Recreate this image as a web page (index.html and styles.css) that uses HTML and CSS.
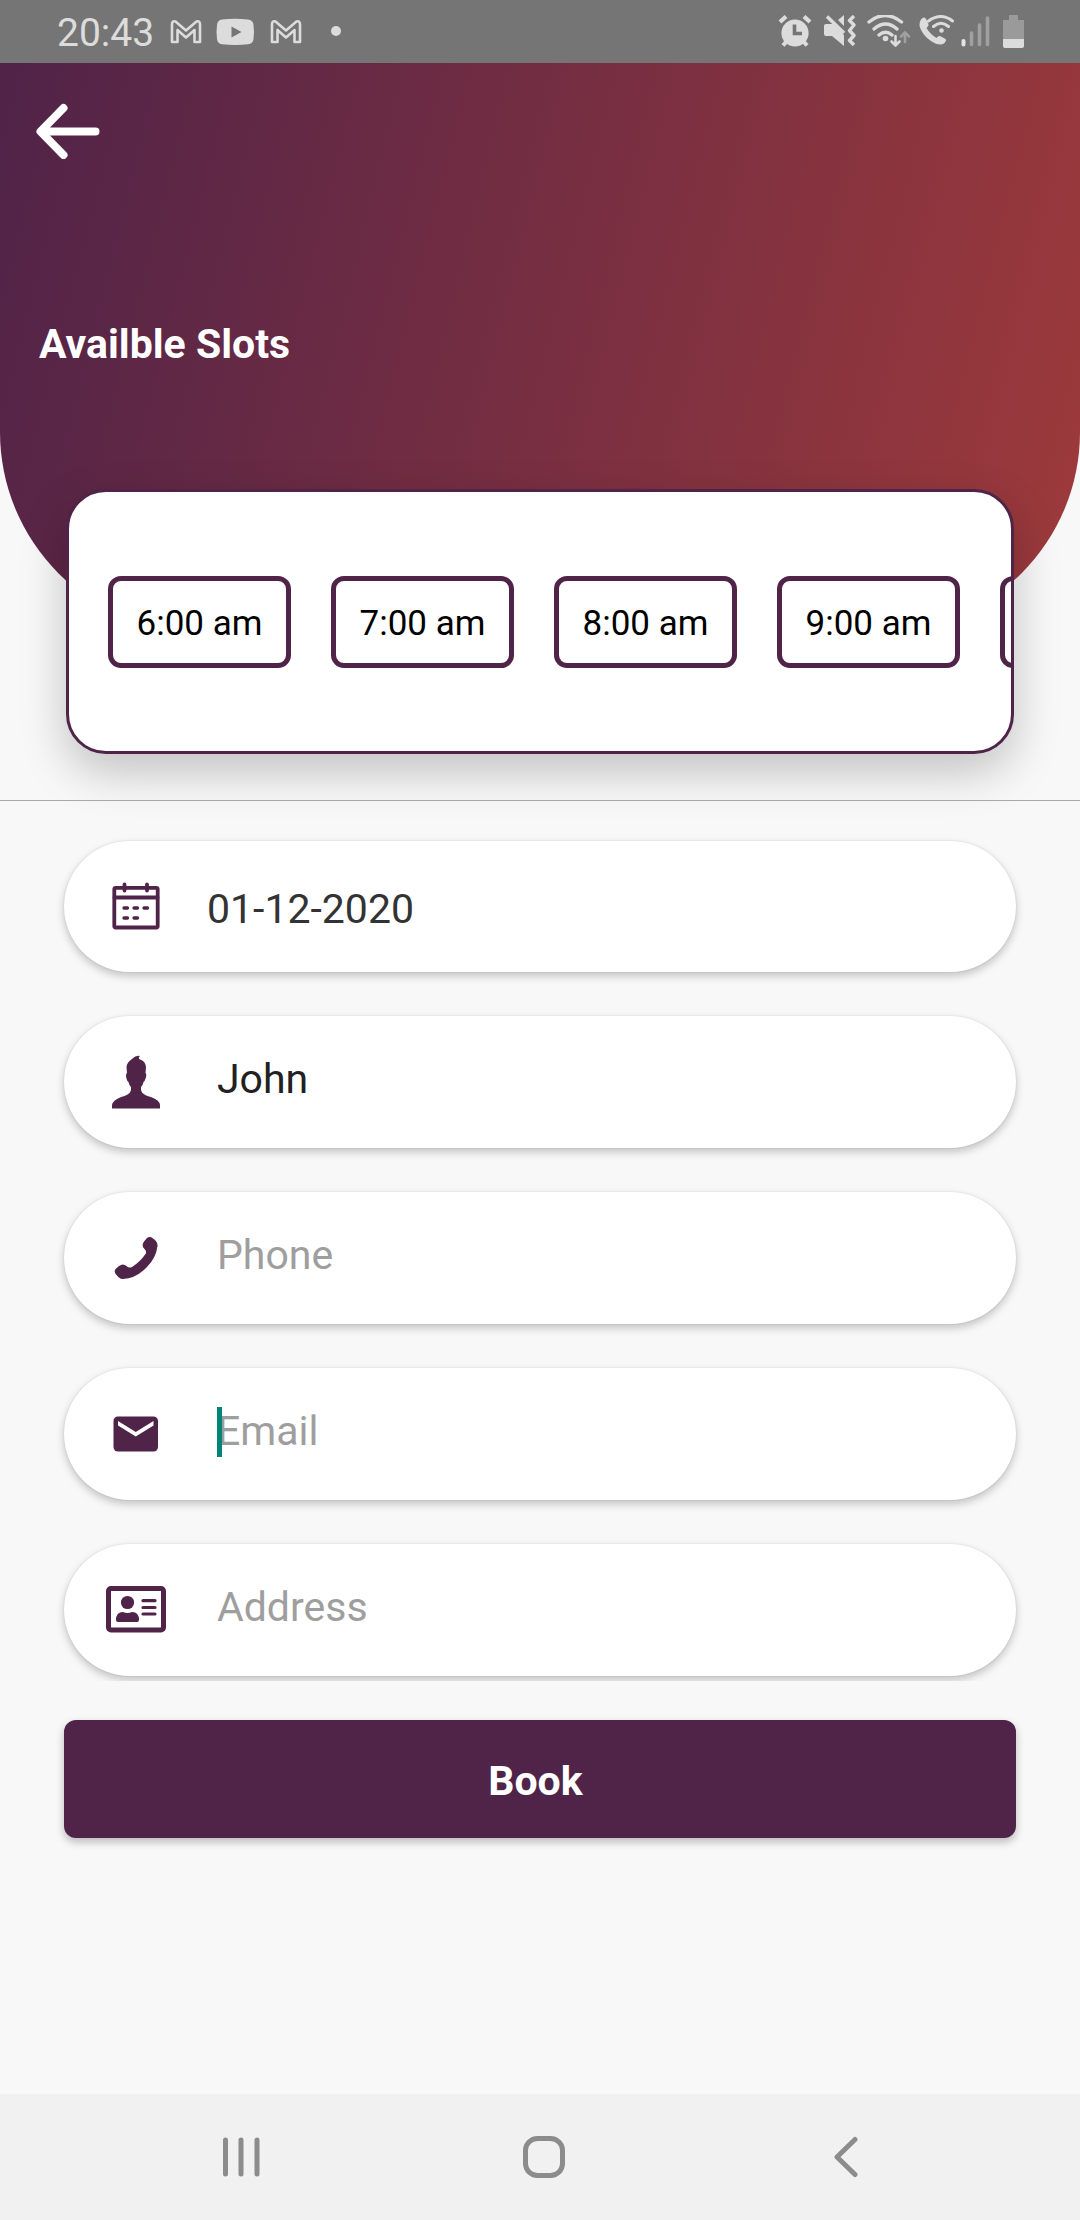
FILE: index.html
```html
<!DOCTYPE html>
<html lang="en">
<head>
    <meta charset="UTF-8">
    <meta name="viewport" content="width=device-width, initial-scale=1.0">
    <title>Book Appointment</title>
    <link rel="stylesheet" href="styles.css">
</head>
<body>
<div class="screen">
    <!-- Status bar -->
    <div class="status-bar">
        <span class="clock">20:43</span>
        <svg class="status-left" width="176" height="34" viewBox="0 0 176 34" fill="none">
            <path id="gmail" d="M2 24V6.500Q2 2.500 5.500 3.500L16 12.500L26.500 3.500Q30 2.500 30 6.500V24H24.500V12L16 19.500L7.500 12V24Z" stroke="#dcdcdc" stroke-width="2.600" stroke-linejoin="round"/>
            <path d="M52 1.500Q65 0 78 1.500Q83 2 83.500 7Q84.500 14 83.500 21Q83 26 78 26.300Q65 27.500 52 26.300Q47.500 26 47 21Q46 14 47 7Q47.500 2 52 1.500ZM61.500 8.500V19.500L71.500 14Z" fill="#dcdcdc" fill-rule="evenodd"/>
            <use href="#gmail" x="100"/>
            <circle cx="166" cy="13" r="5" fill="#dcdcdc"/>
        </svg>
        <svg class="status-right" width="250" height="34" viewBox="0 0 250 34" fill="none" stroke-linecap="round" stroke-linejoin="round">
            <!-- alarm -->
            <g stroke="#dcdcdc">
                <circle cx="17" cy="18" r="13.600" fill="#dcdcdc" stroke="none"/>
                <path d="M2 7L8 1.500M32 7L26 1.500M8 27L5 30.500M26 27L29 30.500" stroke-width="4.200" stroke-linecap="butt"/>
                <path d="M16.500 9.500V18.500H24" stroke="#757575" stroke-width="3.600" stroke-linecap="butt" stroke-linejoin="miter"/>
            </g>
            <!-- muted with vibration -->
            <path d="M48 9H55L66 20V31L54 21H48Q46 21 46 19V11Q46 9 48 9ZM60 5L66 0V11Z" fill="#dcdcdc"/>
            <path d="M49 1.500L66 18" stroke="#dcdcdc" stroke-width="3.500" stroke-linecap="butt"/>
            <path d="M76 1L71.500 5.500L76 10L71.500 15.500L76 20.500L71.500 25.500L76 30" stroke="#dcdcdc" stroke-width="3.400" stroke-linecap="butt"/>
            <!-- wifi -->
            <path d="M91 7Q107 -6 123.500 7M96 14Q107.500 4 119 14M101 20Q107.500 14.500 114 20" stroke="#dcdcdc" stroke-width="3.400"/>
            <circle cx="107.500" cy="23.500" r="2.800" fill="#dcdcdc"/>
            <path d="M117.500 21V30M113.500 26.500L117.500 30.500L121.500 26.500" stroke="#dcdcdc" stroke-width="2.600"/>
            <path d="M127 27V18M123 21.500L127 17.500L131 21.500" stroke="#a0a0a0" stroke-width="2.600"/>
            <!-- wifi calling -->
            <path d="M143 4.500Q146 1 148 4L150.500 9Q151 11 148.500 13Q152 19 158.500 23Q160.500 20 163 21.500L167.500 24Q169 25.500 166 28.500Q161 31.500 153 26Q144 20 141.500 11Q141 7 143 4.500Z" fill="#dcdcdc"/>
            <path d="M150.500 6Q163 -3 174.500 6M155.500 11.500Q163 5 170.500 11.500" stroke="#dcdcdc" stroke-width="3"/>
            <circle cx="163.500" cy="15.500" r="2.300" fill="#dcdcdc"/>
            <!-- signal -->
            <path d="M185.500 26V29.500" stroke="#e4e4e4" stroke-width="4"/>
            <path d="M193.500 18V29.500M201.500 10V29.500M209.500 3V29.500" stroke="#a0a0a0" stroke-width="3.600"/>
            <!-- battery -->
            <path d="M231 0H240V5H246V24H225V5H231Z" fill="#9a9a9a"/>
            <path d="M225 24H246V31Q246 33 244 33H227Q225 33 225 31Z" fill="#dcdcdc"/>
        </svg>
    </div>

    <!-- Header -->
    <div class="header">
        <svg class="back" width="66" height="56" viewBox="0 0 66 56" fill="none" stroke="#fff" stroke-width="8" stroke-linecap="round" stroke-linejoin="round">
            <path d="M28.500 5L5.500 28.500L28.500 52M6 28.500H60.500"/>
        </svg>
        <h2>Availble Slots</h2>
    </div>

    <div class="slots-card">
        <div class="slot">6:00 am</div>
        <div class="slot">7:00 am</div>
        <div class="slot">8:00 am</div>
        <div class="slot">9:00 am</div>
        <div class="slot"></div>
    </div>

    <form class="booking-form">
        <div class="fields">
            <div class="field date-field">
                <div class="icon">
                    <svg width="48" height="48" viewBox="0 0 48 48" fill="none" stroke="#502348" stroke-width="3.800" stroke-linecap="round">
                        <rect x="2.300" y="5.800" width="43.400" height="39.700" rx="1.500"/>
                        <path d="M2.500 15.500H45.500"/>
                        <path d="M12.500 2.500V8.500M35 2.500V8.500"/>
                        <path d="M12 26H15.500M22 26H25.500M32 26H35.500M12 36H15.500M22 36H25.500" stroke-width="3.300"/>
                    </svg>
                </div>
                <input type="text" value="01-12-2020">
            </div>
            <div class="field">
                <div class="icon">
                    <svg width="48" height="54" viewBox="0 0 48 54" fill="#502348">
                        <path d="M28 1Q25.500 3 28 4.500Q33.500 6 34 12L33.500 18Q35 19 33.700 23Q33 26 31.500 27Q31 30 29 32Q28.500 35 30 37.500Q33 40.500 39 42Q47.500 45 48 50V53.500H0V50Q1 45 9 42Q15 40.500 18 37.500Q19.500 35 19 32Q17 30 16.500 27Q15 26 14.300 23Q13.500 19 15 18L14.500 12Q15 7 20 4Q24 0 28 1Z"/>
                    </svg>
                </div>
                <input type="text" placeholder="Name" value="John">
            </div>
            <div class="field">
                <div class="icon">
                    <svg width="44" height="44" viewBox="0 0 44 44" fill="#502348">
                        <path d="M33 2Q36 0 39 2.500Q44 6 43.500 10Q42 22 33 31Q22 42.500 9 43Q6 43.500 2.500 39Q-0.500 36 1.500 33L5 30Q9 27 12.500 30Q15 32.500 18 31Q26 26 31.500 18Q33 15.500 30.500 13Q27 10 30 5.500Z"/>
                    </svg>
                </div>
                <input type="tel" placeholder="Phone">
            </div>
            <div class="field">
                <div class="icon">
                    <svg width="46" height="36" viewBox="0 0 46 36">
                        <rect x="0.500" y="0.500" width="44.500" height="35" rx="4.500" fill="#502348"/>
                        <path d="M5 5L22.750 16L40.500 5V9.500L22.750 20.500L5 9.500Z" fill="#fff"/>
                    </svg>
                </div>
                <input type="email" placeholder="Email">
                <span class="caret"></span>
            </div>
            <div class="field">
                <div class="icon">
                    <svg width="60" height="47" viewBox="0 0 60 47" fill="#502348">
                        <rect x="2.500" y="2.500" width="55" height="41.500" rx="2.500" fill="none" stroke="#502348" stroke-width="5"/>
                        <circle cx="21.500" cy="16.500" r="6.600"/>
                        <path d="M10 34Q10 26 17 26Q21.500 28 26 26Q33 26 33 34Q33 36 31 36H12Q10 36 10 34Z"/>
                        <path d="M37 14.700H49M37 21.500H49M37 28H49" stroke="#502348" stroke-width="3.200" stroke-linecap="round"/>
                    </svg>
                </div>
                <input type="text" placeholder="Address">
            </div>
        </div>
        <button type="button" class="book-btn">Book</button>
    </form>

    <!-- Navigation bar -->
    <div class="nav-bar">
        <svg width="42" height="42" viewBox="0 0 42 42" fill="none" stroke="#8c8c8c" stroke-width="5" stroke-linecap="round">
            <path d="M5.500 4V38M21 4V38M37 4V38"/>
        </svg>
        <svg width="42" height="42" viewBox="0 0 42 42" fill="none" stroke="#8c8c8c" stroke-width="5">
            <rect x="2.500" y="2.500" width="37" height="37" rx="12"/>
        </svg>
        <svg width="42" height="42" viewBox="0 0 42 42" fill="none" stroke="#8c8c8c" stroke-width="5" stroke-linecap="round" stroke-linejoin="round">
            <path d="M30 3.500L12 21L30 38.500"/>
        </svg>
    </div>
</div>
</body>
</html>
```
FILE: styles.css
```css
body {
    margin: 0;
    background: #f8f8f8;
    font-family: Roboto, sans-serif;
}
.screen {
    width: 1080px;
    height: 2220px;
    display: flex;
    flex-direction: column;
    overflow: hidden;
}
svg {
    display: block;
}

.status-bar {
    height: 63px;
    box-sizing: border-box;
    padding: 0 52px 0 57px;
    display: flex;
    flex-shrink: 0;
    background: #757575;
}
.clock {
    width: 113px;
    color: #dcdcdc;
    font-size: 39px;
    line-height: 67px;
}
.status-left {
    margin-top: 18px;
}
.status-right {
    margin: 15px 0 0 auto;
}

.header {
    height: 569px;
    box-sizing: border-box;
    padding: 40px 35px 0;
    flex-shrink: 0;
    border-radius: 0 0 200px 200px;
    background: linear-gradient(104deg, #502348 0%, #9e3a3b 100%);
}
.header h2 {
    margin: 161px 0 0 4px;
    color: #fff;
    font-size: 41px;
    line-height: 48px;
    font-weight: bold;
}

.slots-card {
    width: 948px;
    height: 265px;
    box-sizing: border-box;
    margin: -143px auto 0;
    padding: 1px 0 0 39px;
    display: flex;
    flex-shrink: 0;
    align-items: center;
    gap: 40px;
    overflow: hidden;
    background: #fff;
    border: 3px solid #502348;
    border-radius: 40px;
    box-shadow: 0 18px 46px rgba(0, 0, 0, 0.22);
}
.slot {
    width: 183px;
    height: 92px;
    box-sizing: border-box;
    flex-shrink: 0;
    border: 5px solid #502348;
    border-radius: 13px;
    color: #000;
    font-size: 35px;
    line-height: 85px;
    text-align: center;
    white-space: nowrap;
}

.booking-form {
    margin-top: 46px;
    border-top: 1px solid #a0abaa;
}
.fields {
    height: 840.500px;
    padding: 39.500px 64px 0;
    display: flex;
    flex-direction: column;
    gap: 44.400px;
    overflow: hidden;
}
.field {
    position: relative;
    height: 131.500px;
    flex-shrink: 0;
    display: flex;
    align-items: center;
    background: #fff;
    border-radius: 66px;
    box-shadow: 0 4px 8px rgba(0, 0, 0, 0.22), 0 0 2px rgba(0, 0, 0, 0.12);
}
.icon {
    width: 143px;
    display: flex;
    justify-content: center;
    flex-shrink: 0;
}
.field input {
    width: 700px;
    height: 60px;
    margin: -6px 0 0 10px;
    padding: 0;
    border: none;
    outline: none;
    background: transparent;
    color: #212121;
    font-family: inherit;
    font-size: 41px;
}
.field input::placeholder {
    color: #9e9e9e;
    opacity: 1;
}
.date-field input {
    margin: 5px 0 0 0;
    color: #333;
}
.caret {
    position: absolute;
    left: 153px;
    top: 39px;
    width: 5px;
    height: 50px;
    background: #008577;
}
.book-btn {
    display: block;
    width: 952px;
    height: 118px;
    margin: 38.500px auto 0;
    padding: 4px 9px 0 0;
    border: none;
    border-radius: 12px;
    background: #502348;
    color: #fff;
    font-family: inherit;
    font-size: 41px;
    font-weight: bold;
    box-shadow: 0 4px 8px rgba(0, 0, 0, 0.25);
}

.nav-bar {
    height: 126px;
    margin-top: auto;
    padding: 0 213px 0 220px;
    display: flex;
    flex-shrink: 0;
    align-items: center;
    justify-content: space-between;
    background: #f1f1f1;
}
```
